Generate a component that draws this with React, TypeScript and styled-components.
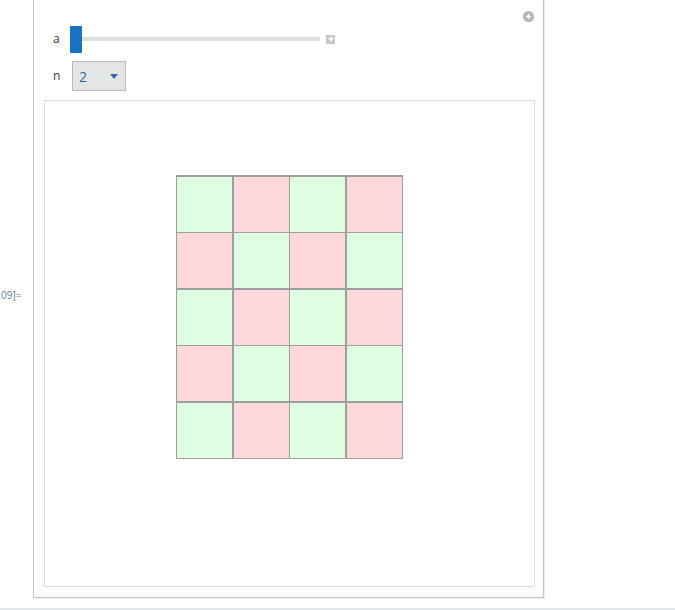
import React from "react";
import styled, { createGlobalStyle } from "styled-components";

const GlobalStyle = createGlobalStyle`
  html, body {
    margin: 0;
    padding: 0;
    background: #ffffff;
    font-family: "Open Sans", "Noto Sans", sans-serif;
  }
`;

const Page = styled.div`
  width: 675px;
  height: 610px;
  display: flex;
  flex-direction: column;
  overflow: hidden;
`;

const OutputRow = styled.div`
  display: flex;
  align-items: flex-start;
  height: 608px;
`;

const OutLabel = styled.div`
  width: 33px;
  margin-top: 288px;
  font-size: 10px;
  line-height: 14px;
  color: #5f7a94;
  font-family: "Open Sans", sans-serif;
  padding-left: 1px;
  box-sizing: border-box;
`;

const Panel = styled.div`
  position: relative;
  width: 511px;
  box-sizing: border-box;
  border: 1px solid #c4c4c4;
  border-top: none;
  box-shadow: 0 1px 0 #ececec, 1px 0 0 #ececec;
  padding: 25px 9px 10px 10px;
  display: flex;
  flex-direction: column;
  background: #ffffff;
`;

const CornerButton = styled.div`
  position: absolute;
  top: 11px;
  right: 9px;
  width: 11px;
  height: 11px;
  border-radius: 50%;
  background: #b4b4b4;
  display: flex;
  align-items: center;
  justify-content: center;
`;

const ControlRow = styled.div<{ $h: number; $gap?: number }>`
  display: flex;
  align-items: center;
  height: ${(p) => p.$h}px;
  margin-top: ${(p) => p.$gap ?? 0}px;
  padding-left: 9px;
`;

const ControlLabel = styled.span`
  width: 17px;
  font-size: 12px;
  color: #3c3c3c;
  line-height: 1;
`;

const Slider = styled.div`
  display: flex;
  align-items: center;
`;

const Thumb = styled.div`
  width: 12px;
  height: 27px;
  background: #1a72c2;
  border-radius: 1px;
`;

const Track = styled.div`
  width: 238px;
  height: 4px;
  background: #dfdfdf;
`;

const PlusBox = styled.div`
  margin-left: 6px;
  width: 9px;
  height: 9px;
  background: #c6c6c6;
  display: flex;
  align-items: center;
  justify-content: center;
`;

const Dropdown = styled.div`
  margin-left: 2px;
  width: 54px;
  height: 30px;
  box-sizing: border-box;
  border: 1px solid #b9b9b9;
  background: #e4e6e6;
  display: flex;
  align-items: center;
  justify-content: space-between;
  padding: 0 7px 0 6px;
  font-size: 14px;
  color: #2f6aa3;
`;

const Caret = styled.div`
  width: 0;
  height: 0;
  border-left: 4px solid transparent;
  border-right: 4px solid transparent;
  border-top: 5px solid #2b6fb2;
`;

const GraphicsBox = styled.div`
  margin-top: 9px;
  width: 491px;
  height: 487px;
  box-sizing: border-box;
  border: 1px solid #dcdcdc;
  display: flex;
  justify-content: center;
  padding-top: 74px;
`;

const Board = styled.div`
  display: grid;
  grid-template-columns: repeat(4, 55px);
  grid-template-rows: repeat(5, 55px);
  gap: 1.5px;
  padding: 1.5px;
  background: #9e9e9e;
  align-self: flex-start;
`;

const Cell = styled.div<{ $green: boolean }>`
  background: ${(p) => (p.$green ? "#dffde0" : "#ffd8d9")};
`;

const BottomBar = styled.div`
  height: 2px;
  background: #e3e7eb;
`;

const Plus: React.FC<{ size: number }> = ({ size }) => (
  <svg width={size} height={size} viewBox="0 0 10 10">
    <path d="M5 2 V8 M2 5 H8" stroke="#ffffff" strokeWidth="1.8" />
  </svg>
);

const App: React.FC = () => {
  const rows = 5;
  const cols = 4;
  const cells = [];
  for (let r = 0; r < rows; r++) {
    for (let c = 0; c < cols; c++) {
      cells.push(<Cell key={`${r}-${c}`} $green={(r + c) % 2 === 0} />);
    }
  }

  return (
    <Page>
      <GlobalStyle />
      <OutputRow>
        <OutLabel>09]=</OutLabel>
        <Panel>
          <CornerButton>
            <Plus size={9} />
          </CornerButton>
          <ControlRow $h={28}>
            <ControlLabel>a</ControlLabel>
            <Slider>
              <Thumb />
              <Track />
              <PlusBox>
                <Plus size={8} />
              </PlusBox>
            </Slider>
          </ControlRow>
          <ControlRow $h={30} $gap={8}>
            <ControlLabel>n</ControlLabel>
            <Dropdown>
              <span>2</span>
              <Caret />
            </Dropdown>
          </ControlRow>
          <GraphicsBox>
            <Board>{cells}</Board>
          </GraphicsBox>
        </Panel>
      </OutputRow>
      <BottomBar />
    </Page>
  );
};

export default App;
